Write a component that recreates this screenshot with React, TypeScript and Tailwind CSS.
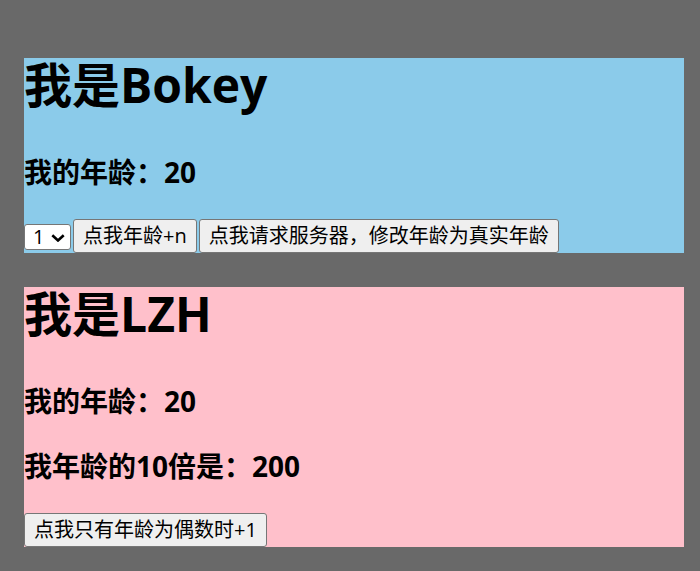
import { useState } from "react";

const font = "font-['Open_Sans','Noto_Sans_CJK_SC',sans-serif]";

function Btn({ children, onClick }: { children: React.ReactNode; onClick?: () => void }) {
  return (
    <button
      onClick={onClick}
      className="flex h-[34px] items-center rounded-[3px] border border-[#767676] bg-[#efefef] px-[9px] text-[20px] leading-none text-black"
    >
      {children}
    </button>
  );
}

function School({ name }: { name: string }) {
  const [age, setAge] = useState(20);
  const [n, setN] = useState(1);

  return (
    <div className="w-[660px] bg-[#8bcbea]">
      <h1 className="mb-[42px] text-[48px] font-bold leading-[53px]">我是{name}</h1>
      <h3 className="mb-[26px] text-[28px] font-bold leading-[39px]">我的年龄：{age}</h3>
      <div className="flex h-[35px] items-end gap-[2px]">
        <div className="relative mb-[3px]">
          <select
            value={n}
            onChange={(e) => setN(Number(e.target.value))}
            className="h-[26px] w-[47px] appearance-none rounded-[3px] border border-[#767676] bg-white pl-[8px] text-[20px] leading-none text-black"
          >
            <option value={1}>1</option>
            <option value={2}>2</option>
            <option value={3}>3</option>
          </select>
          <svg
            className="pointer-events-none absolute left-[27px] top-[10px]"
            width="14"
            height="8"
            viewBox="0 0 14 8"
            fill="none"
          >
            <polyline points="1.3,1.3 7,6.5 12.7,1.3" stroke="black" strokeWidth="2.6" />
          </svg>
        </div>
        <Btn onClick={() => setAge(age + n)}>点我年龄+n</Btn>
        <Btn onClick={() => setAge(20)}>点我请求服务器，修改年龄为真实年龄</Btn>
      </div>
    </div>
  );
}

function Student({ name }: { name: string }) {
  const [age, setAge] = useState(20);

  return (
    <div className="w-[660px] bg-[#ffc0cb]">
      <h1 className="mb-[42px] text-[48px] font-bold leading-[53px]">我是{name}</h1>
      <h3 className="mb-[26px] text-[28px] font-bold leading-[39px]">我的年龄：{age}</h3>
      <h3 className="mb-[26px] text-[28px] font-bold leading-[39px]">我年龄的10倍是：{age * 10}</h3>
      <div className="flex h-[35px] items-end">
        <Btn onClick={() => age % 2 === 0 && setAge(age + 1)}>点我只有年龄为偶数时+1</Btn>
      </div>
    </div>
  );
}

export default function App() {
  return (
    <div className={`${font} min-h-screen bg-[#696969] pl-[24px] pt-[58px] text-black`}>
      <div className="flex flex-col gap-[34px]">
        <School name="Bokey" />
        <Student name="LZH" />
      </div>
    </div>
  );
}
